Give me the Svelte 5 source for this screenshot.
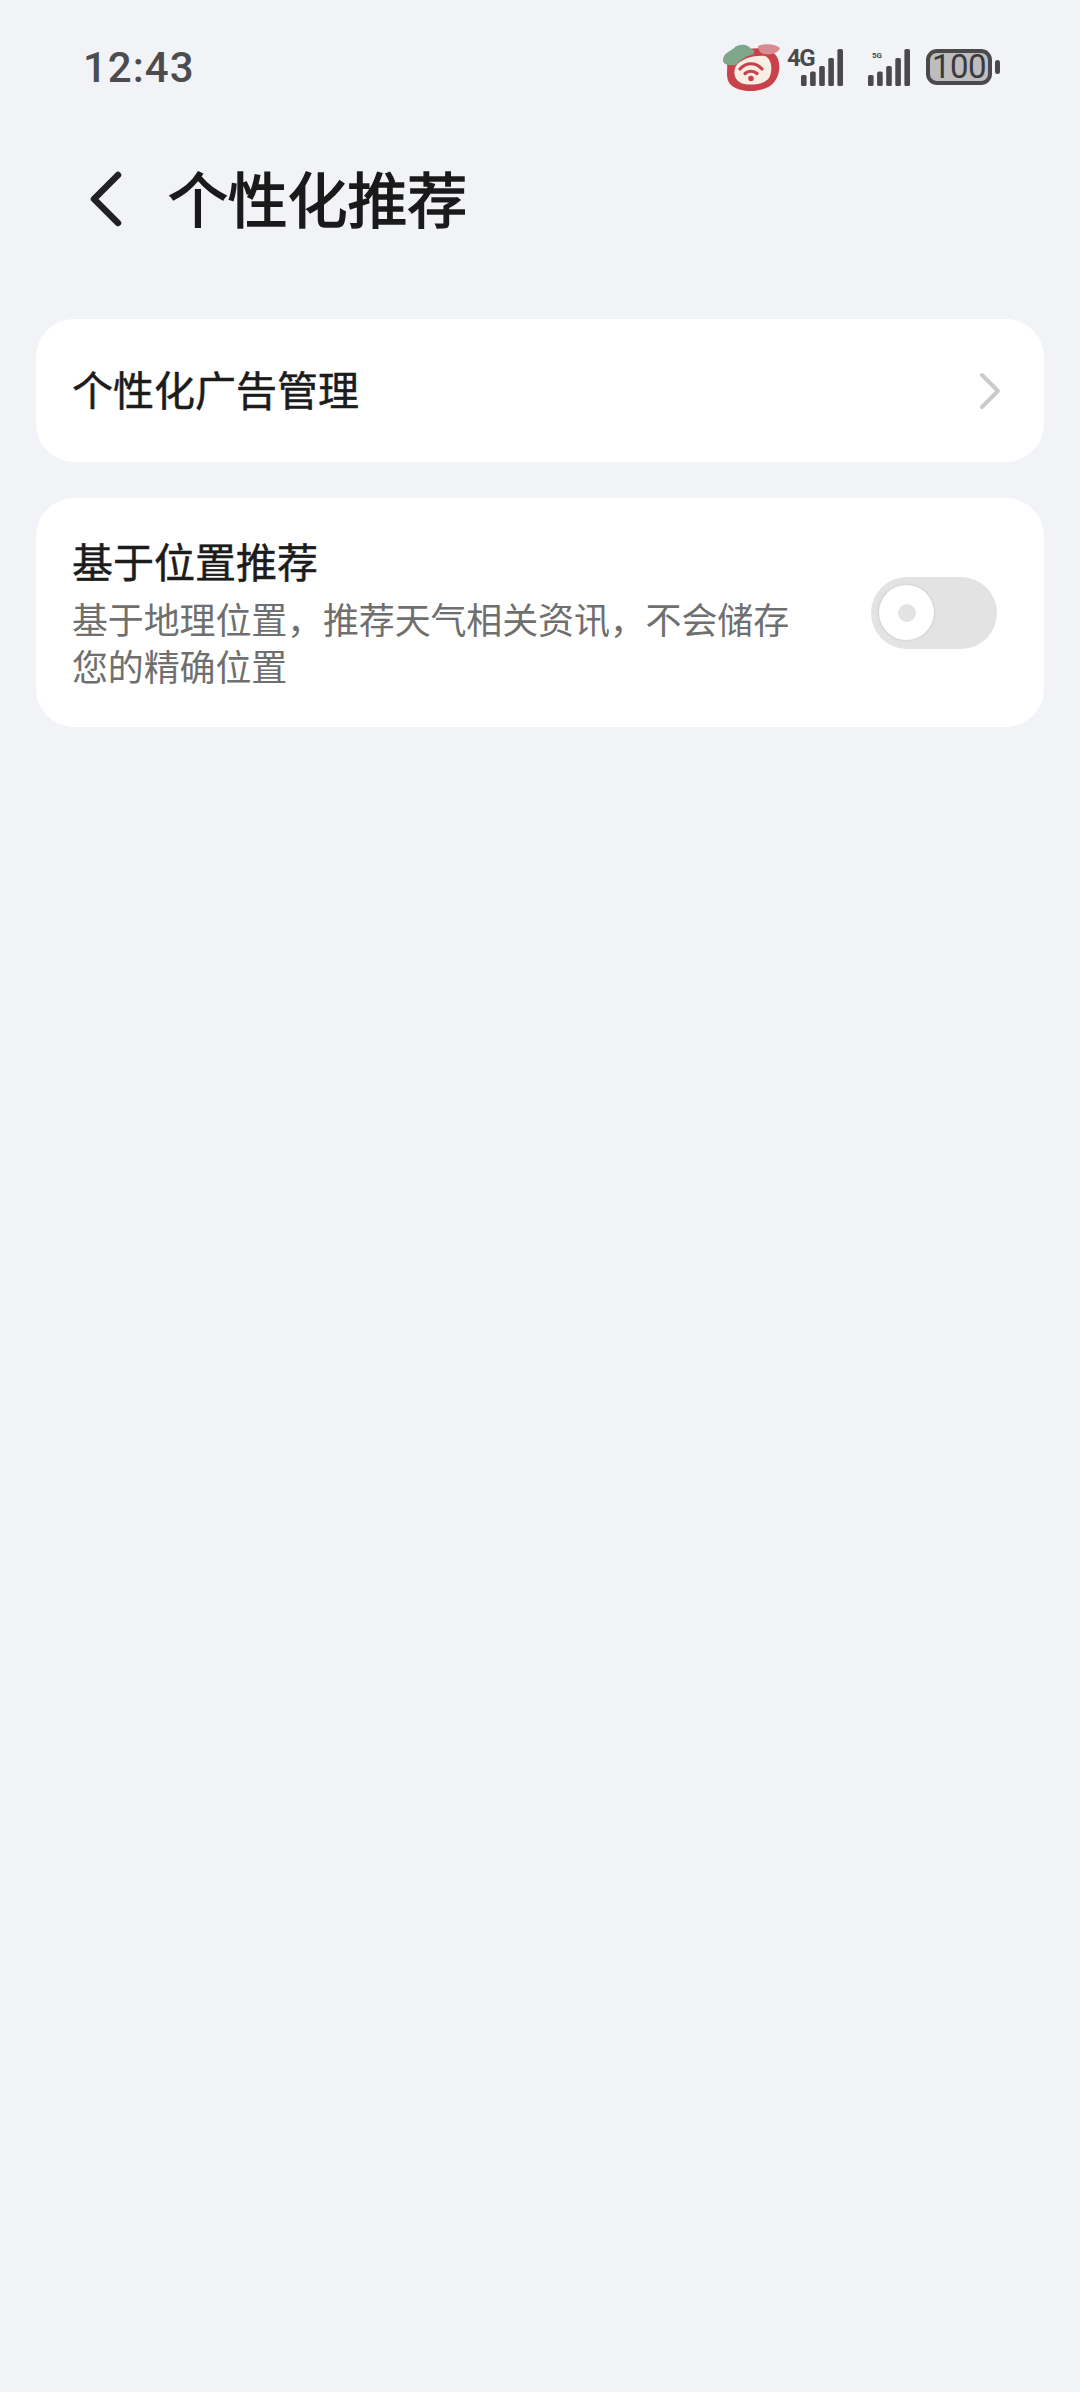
<script>
  const bars = [
    { x: 0, h: 11 },
    { x: 9.1, h: 14.5 },
    { x: 18.2, h: 20 },
    { x: 27.3, h: 28 },
    { x: 36.4, h: 37 }
  ];
</script>

<div class="page">
  <div class="status">
    <span class="time">12:43</span>
    <div class="status-icons">
      <svg class="sticker" width="60" height="52" viewBox="0 0 60 52">
        <path d="M5 22 C3 14 14 8 26 8 C38 6 52 7 56 18 C60 29 55 43 44 47 C32 52 15 51 8 43 C3 37 6 28 5 22 Z" fill="#c9414a" />
        <path d="M14 25 C19 17 34 14 43 15 C50 18 51 30 47 37 C42 44 27 45 19 42 C12 38 11 31 14 25 Z" fill="#f9eee4" />
        <path d="M1 18 C2 11 10 10 13 6 C19 2 27 4 29 8 C34 9 33 14 29 14 C22 16 17 20 14 24 C8 25 0 24 1 18 Z" fill="#7fa88b" />
        <path d="M36 5 C42 2 54 3 58 7 C56 13 46 15 39 12 C37 10 36 8 36 5 Z" fill="#d98b90" />
        <path d="M18 28 C24 21 34 21 40 28" fill="none" stroke="#c9414a" stroke-width="3.2" stroke-linecap="round" />
        <path d="M23 32.5 C26 29.5 32 29.5 35 32.5" fill="none" stroke="#c9414a" stroke-width="3.2" stroke-linecap="round" />
        <circle cx="29" cy="37.5" r="2.8" fill="#c9414a" />
      </svg>
      <div class="signal first">
        <span class="net net-4g">4G</span>
        <svg width="42" height="37" viewBox="0 0 42 37">
          {#each bars as b}
            <rect x={b.x} y={37 - b.h} width="5.6" height={b.h} rx="1.6" fill="#4a4a4c" />
          {/each}
        </svg>
      </div>
      <div class="signal second">
        <span class="net net-5g">5G</span>
        <svg width="42" height="37" viewBox="0 0 42 37">
          {#each bars as b}
            <rect x={b.x} y={37 - b.h} width="5.6" height={b.h} rx="1.6" fill="#4a4a4c" />
          {/each}
        </svg>
      </div>
      <div class="battery">
        <span class="battery-body">100</span>
        <span class="battery-tip"></span>
      </div>
    </div>
  </div>

  <header class="titlebar">
    <svg class="back" width="34" height="56" viewBox="0 0 34 56">
      <path d="M30 4 L6 28 L30 52" fill="none" stroke="#222" stroke-width="6.5" stroke-linecap="round" stroke-linejoin="round" />
    </svg>
    <h1>个性化推荐</h1>
  </header>

  <section class="card link-card">
    <span class="item-title">个性化广告管理</span>
    <svg class="chevron" width="22" height="38" viewBox="0 0 22 38">
      <path d="M3 3 L19 19 L3 35" fill="none" stroke="#cacaca" stroke-width="4" stroke-linecap="round" stroke-linejoin="round" />
    </svg>
  </section>

  <section class="card toggle-card">
    <div class="toggle-text">
      <span class="item-title">基于位置推荐</span>
      <p>基于地理位置，推荐天气相关资讯，不会储存您的精确位置</p>
    </div>
    <div class="switch">
      <div class="knob"><span class="dot"></span></div>
    </div>
  </section>
</div>

<style>
  :global(body) {
    margin: 0;
    background: #f1f3f7;
  }

  .page {
    height: 2392px;
    background: #f1f3f7;
    font-family: "Noto Sans CJK SC", "Noto Sans", sans-serif;
    color: #1a1a1a;
    overflow: hidden;
  }

  .status {
    display: flex;
    justify-content: space-between;
    align-items: center;
    height: 60px;
    padding: 37px 80px 0 83px;
  }

  .time {
    margin-top: 2px;
    font-family: Roboto, sans-serif;
    font-size: 42px;
    font-weight: 500;
    letter-spacing: 1px;
    color: #4c4c4e;
    line-height: 60px;
  }

  .status-icons {
    display: flex;
    align-items: center;
  }

  .sticker {
    margin-right: 5px;
  }

  .signal {
    position: relative;
    width: 42px;
    height: 37px;
    padding-left: 14px;
  }

  .signal svg {
    display: block;
  }

  .second {
    margin-left: 25px;
    padding-left: 0;
  }

  .net {
    position: absolute;
    font-family: Roboto, sans-serif;
    font-weight: 700;
    color: #4a4a4c;
    line-height: 1;
  }

  .net-4g {
    left: 0;
    top: -3px;
    font-size: 24px;
    letter-spacing: -1.5px;
  }

  .net-5g {
    left: 4px;
    top: 3px;
    font-size: 8px;
  }

  .battery {
    display: flex;
    align-items: center;
    margin-left: 16px;
  }

  .battery-body {
    box-sizing: border-box;
    width: 66px;
    height: 36px;
    border: 4px solid #4a4a4c;
    border-radius: 11px;
    background: #bdbdbf;
    font-family: Roboto, sans-serif;
    font-size: 33px;
    font-weight: 400;
    line-height: 28px;
    text-align: center;
    letter-spacing: -0.5px;
    color: #3a3a3c;
  }

  .battery-tip {
    width: 5px;
    height: 14px;
    margin-left: 3px;
    border-radius: 3px;
    background: #4a4a4c;
  }

  .titlebar {
    display: flex;
    align-items: center;
    gap: 46px;
    height: 72px;
    margin-top: 66px;
    padding-left: 88px;
  }

  h1 {
    margin: 0 0 5px;
    font-size: 60px;
    font-weight: 400;
    line-height: 72px;
    letter-spacing: -0.2px;
    color: #1a1a1a;
    -webkit-text-stroke: 1.5px #1a1a1a;
  }

  .card {
    display: flex;
    align-items: center;
    justify-content: space-between;
    box-sizing: border-box;
    margin: 0 36px;
    background: #fff;
    border-radius: 38px;
  }

  .link-card {
    height: 143px;
    margin-top: 84px;
    padding: 0 36px;
  }

  .link-card .item-title {
    margin-bottom: 6px;
  }

  .chevron {
    margin-right: 7px;
  }

  .toggle-card {
    height: 229px;
    margin-top: 36px;
    padding: 0 47px 0 36px;
  }

  .item-title {
    display: block;
    font-size: 41px;
    font-weight: 400;
    line-height: 56px;
    color: #1c1c1c;
    -webkit-text-stroke: 0.5px #1c1c1c;
  }

  .toggle-text {
    width: 722px;
    margin-top: -3px;
  }

  .toggle-text .item-title {
    line-height: 53px;
    margin-bottom: 8px;
  }

  .toggle-text p {
    margin: 0;
    font-size: 36px;
    line-height: 47px;
    letter-spacing: -0.15px;
    color: #6f6f6f;
  }

  .switch {
    display: flex;
    align-items: center;
    box-sizing: border-box;
    width: 126px;
    height: 72px;
    padding-left: 8px;
    border-radius: 36px;
    background: #e3e3e3;
  }

  .knob {
    display: flex;
    align-items: center;
    justify-content: center;
    box-sizing: border-box;
    width: 55px;
    height: 55px;
    border-radius: 50%;
    background: #fff;
    box-shadow: 0 0 2px 1px #d2d2d2;
  }

  .dot {
    width: 18px;
    height: 18px;
    border-radius: 50%;
    background: #e3e3e3;
  }
</style>
